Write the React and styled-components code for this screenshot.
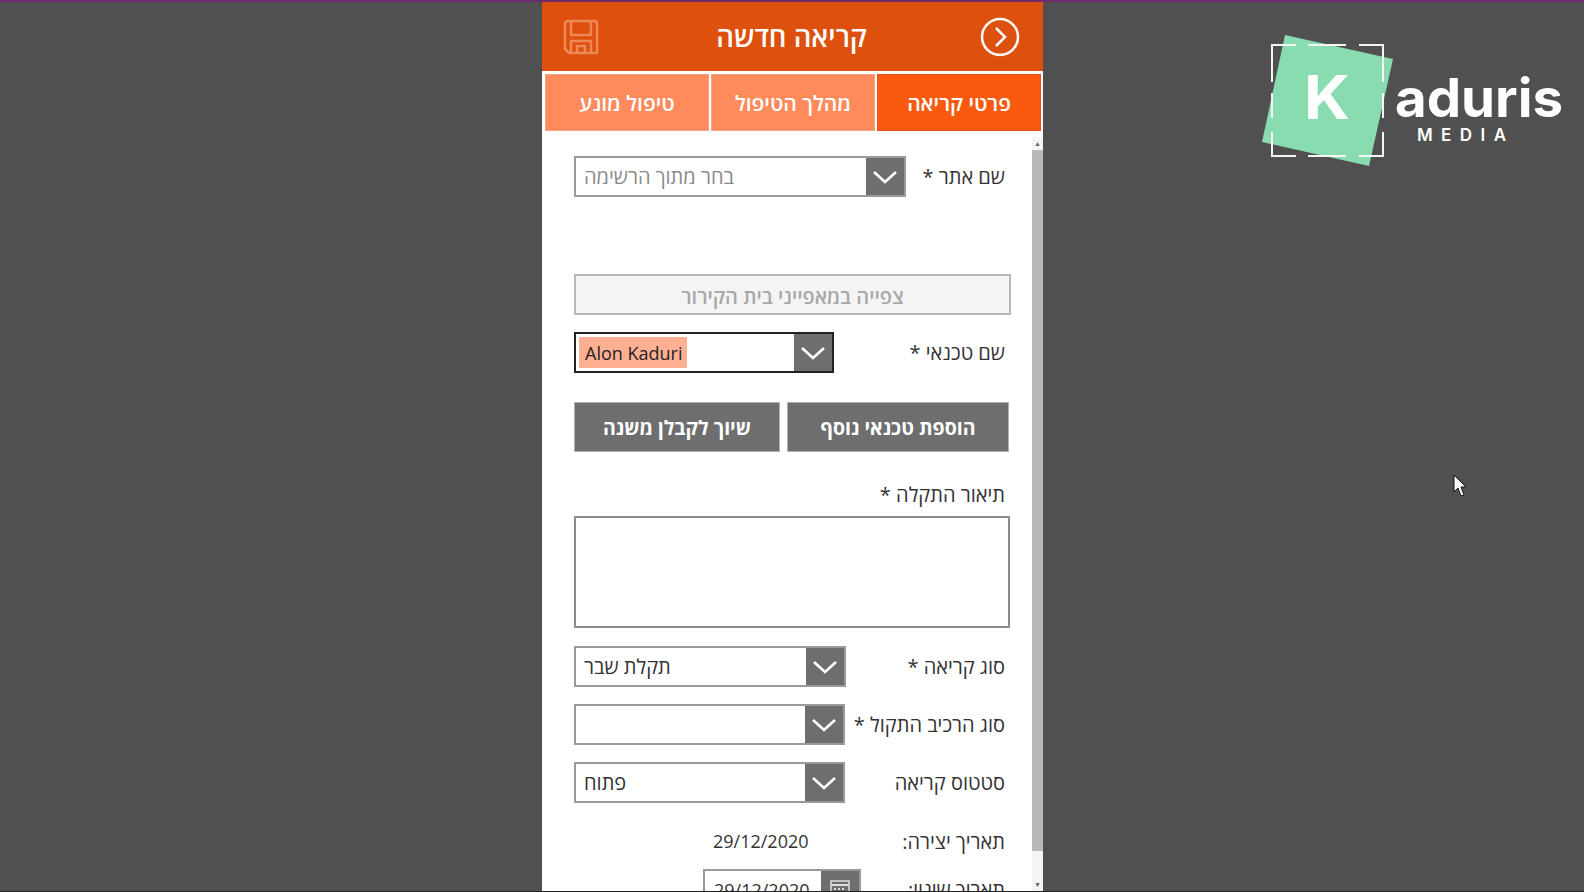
import React from "react";
import styled, { createGlobalStyle } from "styled-components";

const GlobalStyle = createGlobalStyle`
  html, body {
    margin: 0;
    height: 100%;
    overflow: hidden;
    background: #505050;
  }
  * { box-sizing: border-box; }
`;

const Page = styled.div`
  position: relative;
  height: 892px;
  background: #505050;
  border-top: 2px solid #6f2a72;
  border-bottom: 1px solid #222;
  display: flex;
  justify-content: center;
  overflow: hidden;
  font-family: "Open Sans", "Liberation Sans", "DejaVu Sans", sans-serif;
`;

const Panel = styled.div`
  width: 501px;
  height: 100%;
  margin-left: 1px;
  background: #fff;
  display: flex;
  flex-direction: column;
  direction: rtl;
`;

const Header = styled.div`
  height: 69px;
  flex: none;
  background: #de500e;
  display: grid;
  grid-template-columns: 1fr auto 1fr;
  align-items: center;
  padding: 0 23px 0 21px;
`;

const Title = styled.div`
  color: #fff;
  font-size: 27.5px;
  font-weight: 600;
`;

const Tabs = styled.div`
  flex: none;
  display: flex;
  gap: 2px;
  padding: 3px 2px 0 3px;
`;

const Tab = styled.div`
  flex: 1;
  height: 57px;
  display: flex;
  align-items: center;
  justify-content: center;
  font-size: 21px;
  font-weight: 600;
  color: #fff;
  background: ${(p) => (p.$active ? "#fa5a0f" : "#ff8a5c")};
  border: 1px solid ${(p) => (p.$active ? "#e0551c" : "#f4a482")};
`;

const Body = styled.div`
  flex: 1;
  min-height: 0;
  display: flex;
  padding-top: 6px;
`;

const ScrollTrack = styled.div`
  flex: none;
  width: 11px;
  background: #f4f4f4;
  display: flex;
  flex-direction: column;
  align-items: center;
  color: #666;
  font-size: 7px;
  line-height: 13px;
`;

const ScrollThumb = styled.div`
  flex: 1;
  width: 100%;
  background: #b9b9b9;
  margin-bottom: 27px;
`;

const Form = styled.div`
  flex: 1;
  min-width: 0;
  padding: 19px 21px 0 32px;
  display: flex;
  flex-direction: column;
  overflow: hidden;
`;

const Row = styled.div`
  display: flex;
  align-items: center;
  justify-content: space-between;
  flex: none;
  margin-top: ${(p) => p.$top || 0}px;
`;

const Label = styled.div`
  font-size: 20px;
  line-height: 27px;
  padding-right: 6px;
  color: #333;
  white-space: nowrap;
`;

const SelectBox = styled.div`
  width: ${(p) => p.$width}px;
  height: 41px;
  flex: none;
  display: flex;
  background: #fff;
  border: 2px solid ${(p) => (p.$focused ? "#222" : "#9a9a9a")};
  direction: ltr;
`;

const SelectValue = styled.div`
  flex: 1;
  min-width: 0;
  display: flex;
  align-items: center;
  direction: rtl;
  justify-content: flex-end;
  padding: 0 8px;
  font-size: 20px;
  color: ${(p) => (p.$muted ? "#8a8a8a" : "#333")};
`;

const ArrowButton = styled.div`
  width: 38px;
  flex: none;
  background: #6e6e6e;
  display: flex;
  align-items: center;
  justify-content: center;
`;

const Chip = styled.div`
  align-self: center;
  flex: none;
  width: 108px;
  height: 31px;
  margin-left: 3px;
  padding-left: 6px;
  display: flex;
  align-items: center;
  font-size: 18px;
  white-space: nowrap;
  color: #222;
  background: #ffb092;
`;

const ViewButton = styled.div`
  height: 41px;
  flex: none;
  margin-top: 77px;
  padding-top: 3px;
  background: #f4f4f4;
  border: 2px solid #b8b8b8;
  color: #a8a8a8;
  font-size: 20px;
  font-weight: 600;
  display: flex;
  align-items: center;
  justify-content: center;
`;

const ButtonRow = styled.div`
  display: flex;
  flex: none;
  gap: 7px;
  margin-top: 29px;
  padding-right: 2px;
`;

const ActionButton = styled.div`
  width: ${(p) => p.$width}px;
  height: 50px;
  background: #6e6e6e;
  border: 1px solid #b0b0b0;
  color: #fff;
  font-size: 19.5px;
  font-weight: 700;
  display: flex;
  align-items: center;
  justify-content: center;
`;

const TextArea = styled.div`
  flex: none;
  width: 436px;
  height: 112px;
  margin-top: 8px;
  background: #fff;
  border: 2px solid #8c8c8c;
  align-self: flex-end;
`;

const DateText = styled.div`
  font-size: 18px;
  line-height: 25px;
  color: #333;
  direction: ltr;
  margin-left: 139px;
`;

const DateBox = styled.div`
  width: 158px;
  height: 41px;
  flex: none;
  margin-left: 129px;
  display: flex;
  border: 2px solid #9a9a9a;
  direction: ltr;
  font-size: 18px;
  color: #333;
`;

const DateValue = styled.div`
  flex: 1;
  padding: 0 9px;
  display: flex;
  align-items: center;
`;

const CalendarButton = styled.div`
  width: 38px;
  flex: none;
  background: #6e6e6e;
  display: flex;
  justify-content: center;
  padding-top: 9px;
`;

const BackIcon = styled.svg`
  width: 40px;
  height: 40px;
  display: block;
  justify-self: start;
`;

const SaveIcon = styled.svg`
  width: 36px;
  height: 36px;
  display: block;
  justify-self: end;
`;

const Logo = styled.svg`
  position: absolute;
  left: 1258px;
  top: 28px;
  width: 326px;
  height: 140px;
`;

const Cursor = styled.svg`
  position: absolute;
  left: 1453px;
  top: 472px;
  width: 14px;
  height: 24px;
`;

const Chevron = () => (
  <svg width="26" height="16" viewBox="0 0 26 16">
    <path d="M2 3 L13 13 L24 3" fill="none" stroke="#fff" strokeWidth="2.6" />
  </svg>
);

const Select = ({ width, value, muted, focused, chip }) => (
  <SelectBox $width={width} $focused={focused}>
    {chip ? <Chip>{chip}</Chip> : null}
    <SelectValue $muted={muted}>{value}</SelectValue>
    <ArrowButton>
      <Chevron />
    </ArrowButton>
  </SelectBox>
);

export default function App() {
  return (
    <>
      <GlobalStyle />
      <Page>
        <Panel>
          <Header>
            <BackIcon viewBox="0 0 40 40">
              <circle cx="20" cy="20" r="18" fill="none" stroke="#fff" strokeWidth="2.5" />
              <path d="M16 11 L25 20 L16 29" fill="none" stroke="#fff" strokeWidth="2.5" />
            </BackIcon>
            <Title>קריאה חדשה</Title>
            <SaveIcon viewBox="0 0 36 36">
              <path
                d="M2 5 Q2 2 5 2 L31 2 Q34 2 34 5 L34 34 L6 34 L2 30 Z M8 2 L8 16 L28 16 L28 2 M8 34 L8 22 L28 22 L28 34 M14 34 L14 27 L22 27 L22 34"
                fill="none"
                stroke="#ee8857"
                strokeWidth="2.5"
              />
            </SaveIcon>
          </Header>
          <Tabs>
            <Tab $active>פרטי קריאה</Tab>
            <Tab>מהלך הטיפול</Tab>
            <Tab>טיפול מונע</Tab>
          </Tabs>
          <Body>
            <ScrollTrack>
              ▲
              <ScrollThumb />
              ▼
            </ScrollTrack>
            <Form>
              <Row>
                <Label>שם אתר *</Label>
                <Select width={332} value="בחר מתוך הרשימה" muted />
              </Row>
              <ViewButton>צפייה במאפייני בית הקירור</ViewButton>
              <Row $top={17}>
                <Label>שם טכנאי *</Label>
                <Select width={260} focused chip="Alon Kaduri" />
              </Row>
              <ButtonRow>
                <ActionButton $width={222}>הוספת טכנאי נוסף</ActionButton>
                <ActionButton $width={206}>שיוך לקבלן משנה</ActionButton>
              </ButtonRow>
              <Row $top={29}>
                <Label>תיאור התקלה *</Label>
              </Row>
              <TextArea />
              <Row $top={18}>
                <Label>סוג קריאה *</Label>
                <Select width={272} value="תקלת שבר" />
              </Row>
              <Row $top={17}>
                <Label>סוג הרכיב התקול *</Label>
                <Select width={271} value="" />
              </Row>
              <Row $top={17}>
                <Label>סטטוס קריאה</Label>
                <Select width={271} value="פתוח" />
              </Row>
              <Row $top={25}>
                <Label>תאריך יצירה:</Label>
                <DateText>29/12/2020</DateText>
              </Row>
              <Row $top={14}>
                <Label>תאריך שינוי:</Label>
                <DateBox>
                  <DateValue>29/12/2020</DateValue>
                  <CalendarButton>
                    <svg width="20" height="18" viewBox="0 0 20 18">
                      <rect x="1" y="1" width="18" height="16" fill="none" stroke="#ddd" strokeWidth="1.5" />
                      <path d="M1 5 H19" stroke="#ddd" strokeWidth="2" />
                      <path d="M4 9 H16 M4 13 H16" stroke="#ddd" strokeWidth="2" strokeDasharray="2 2" />
                    </svg>
                  </CalendarButton>
                </DateBox>
              </Row>
            </Form>
          </Body>
        </Panel>
        <Logo viewBox="0 0 326 140">
          <polygon points="27,5 135,29 111,136 4,112" fill="#88dcb0" />
          <path
            d="M14 52 V15 H38 M50 15 H88 M101 15 H125 V52 M125 63 V88 M125 102 V126 H101 M88 126 H50 M38 126 H14 V102 M14 88 V63"
            fill="none"
            stroke="#f4f4f4"
            strokeWidth="2"
          />
          <text x="46" y="89" fontFamily="Inter, sans-serif" fontWeight="700" fontSize="60" fill="#fff" textLength="46" lengthAdjust="spacingAndGlyphs">
            K
          </text>
          <text x="137" y="87" fontFamily="Inter, sans-serif" fontWeight="700" fontSize="54" fill="#fff" textLength="168" lengthAdjust="spacingAndGlyphs">
            aduris
          </text>
          <text x="159" y="111" fontFamily="Inter, sans-serif" fontWeight="600" fontSize="17" fill="#fff" textLength="89">
            MEDIA
          </text>
        </Logo>
        <Cursor viewBox="0 0 14 24">
          <path d="M1 1 L1 18 L5 14 L8 22 L11 21 L8 13 L13 13 Z" fill="#fff" stroke="#111" strokeWidth="1" />
        </Cursor>
      </Page>
    </>
  );
}
